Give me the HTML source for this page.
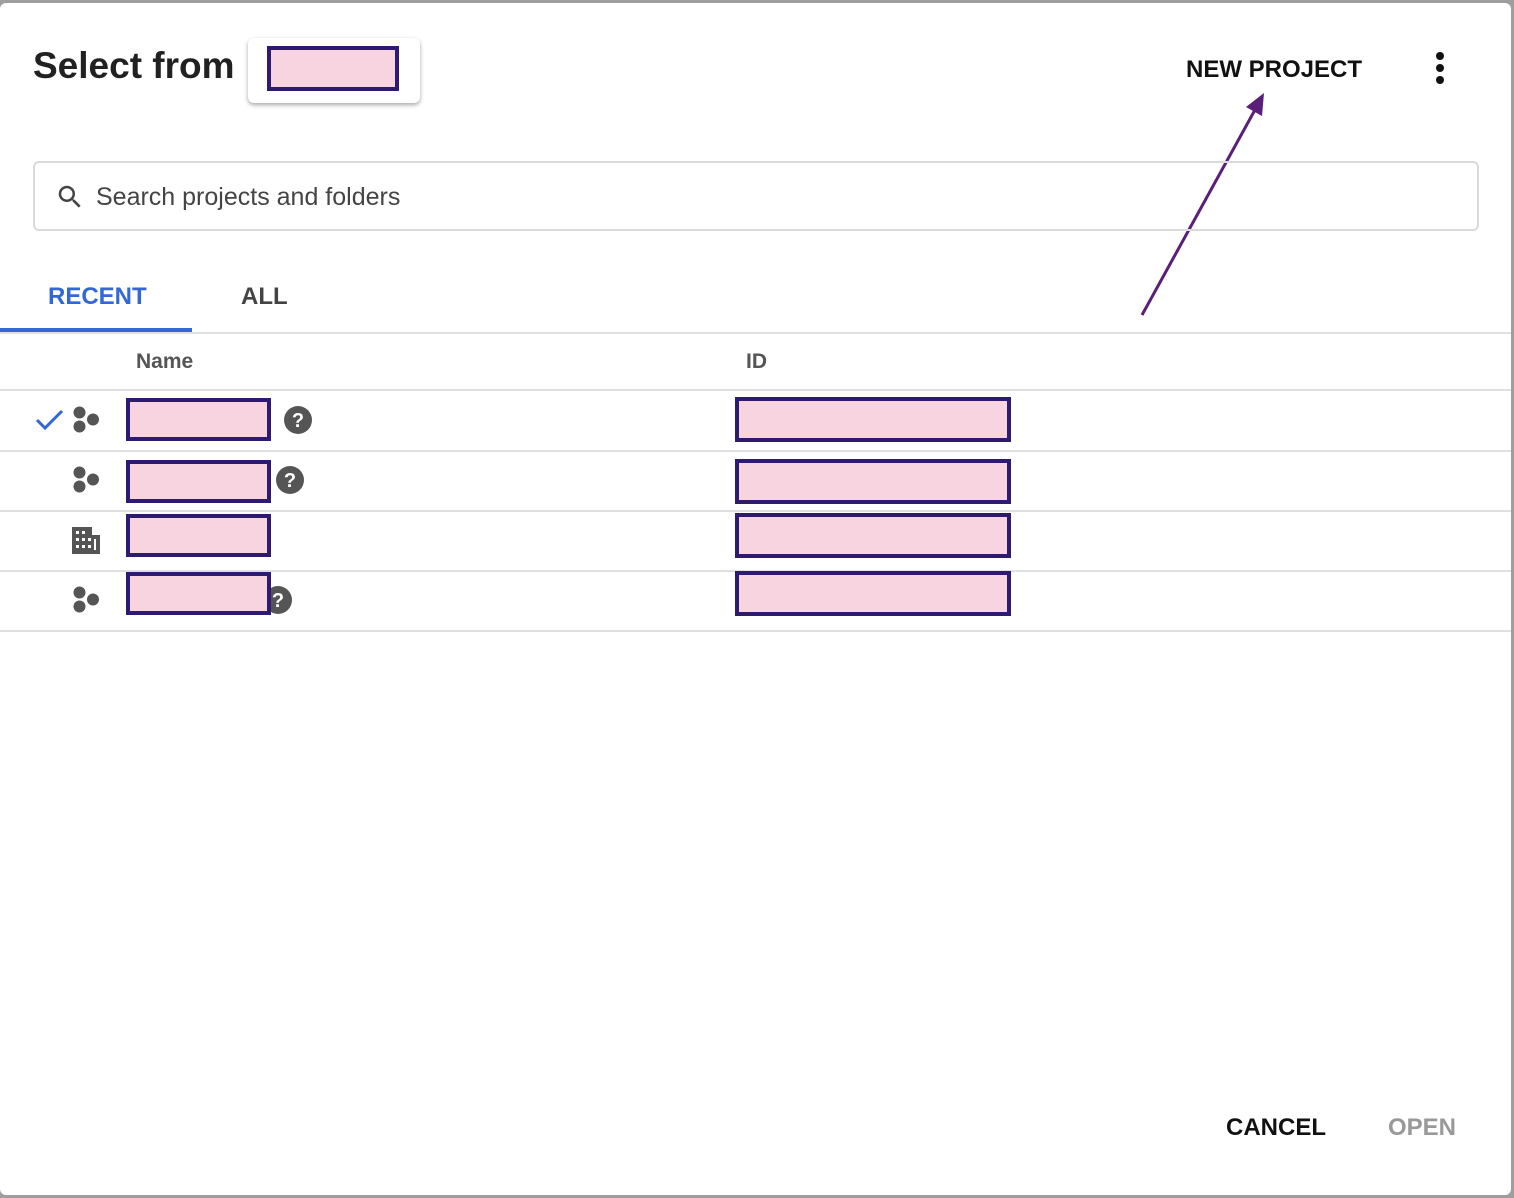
<!DOCTYPE html>
<html><head><style>
body{margin:0;width:1514px;height:1198px;background:#9e9e9e;font-family:"Liberation Sans",sans-serif;position:relative;overflow:hidden}
#d{position:absolute;left:0;top:3px;width:1511px;height:1192px;background:#fff;border-radius:6px}
.a{position:absolute}
.pk{position:absolute;background:#f7d4e0;border:4px solid #2e1a6e;box-sizing:border-box}
.ln{position:absolute;left:0;width:1511px;height:2px;background:#e0e0e0}
.t{position:absolute;white-space:nowrap}
.b{font-weight:bold}
</style></head><body>
<div id="d"></div>
<div class="t b" style="left:33px;top:45px;font-size:37px;color:#212121">Select from</div>
<div class="a" style="left:248px;top:38px;width:172px;height:65px;background:#fff;border-radius:6px;box-shadow:0 2px 4px rgba(0,0,0,.35)"></div>
<div class="pk" style="left:267px;top:46px;width:132px;height:45px"></div>
<div class="t b" style="left:1186px;top:56px;font-size:24px;color:#111">NEW PROJECT</div>
<div class="a" style="left:1436px;top:52px;width:8px;height:8px;border-radius:50%;background:#111"></div>
<div class="a" style="left:1436px;top:64px;width:8px;height:8px;border-radius:50%;background:#111"></div>
<div class="a" style="left:1436px;top:76px;width:8px;height:8px;border-radius:50%;background:#111"></div>
<svg class="a" style="left:0;top:0" width="1514" height="400"><line x1="1142" y1="315" x2="1256" y2="108" stroke="#5b1e78" stroke-width="3"/><polygon points="1264,93 1262,116 1246,107" fill="#5b1e78"/></svg>
<div class="a" style="left:33px;top:161px;width:1446px;height:70px;border:2px solid #dadada;border-radius:6px;box-sizing:border-box"></div>
<svg class="a" style="left:55px;top:182px" width="30" height="30" viewBox="0 0 24 24"><path fill="#444" d="M15.5 14h-.79l-.28-.27A6.470 6.470 0 0 0 16 9.5 6.5 6.5 0 1 0 9.5 16c1.61 0 3.090-.59 4.230-1.570l.27.28v.79l5 4.990L20.490 19l-4.990-5zm-6 0C7.010 14 5 11.990 5 9.5S7.010 5 9.5 5 14 7.010 14 9.5 11.990 14 9.5 14z"/></svg>
<div class="t" style="left:96px;top:183px;font-size:25px;color:#444">Search projects and folders</div>
<div class="t b" style="left:48px;top:283px;font-size:24px;color:#3367d6">RECENT</div>
<div class="t b" style="left:241px;top:283px;font-size:24px;color:#444">ALL</div>
<div class="a" style="left:0;top:328px;width:192px;height:4px;background:#3367d6"></div>
<div class="ln" style="top:332px"></div>
<div class="t b" style="left:136px;top:350px;font-size:21px;color:#555">Name</div>
<div class="t b" style="left:746px;top:350px;font-size:21px;color:#555">ID</div>
<div class="ln" style="top:389px"></div>
<div class="ln" style="top:450px"></div>
<div class="ln" style="top:510px"></div>
<div class="ln" style="top:570px"></div>
<div class="ln" style="top:630px"></div>
<svg class="a" style="left:35px;top:408px" width="30" height="24"><path d="M2 12l8 8L27 3" stroke="#3367d6" stroke-width="3" fill="none"/></svg>
<svg width="0" height="0"><defs><g id="hx" fill="#555"><circle cx="6.5" cy="6.5" r="6"/><circle cx="6.5" cy="20.5" r="6"/><circle cx="20" cy="13.5" r="6"/></g><g id="q"><circle cx="14" cy="14" r="14" fill="#555"/><text x="14" y="21" font-size="20" font-weight="bold" text-anchor="middle" fill="#fff" font-family="Liberation Sans">?</text></g></defs></svg>
<svg class="a" style="left:73px;top:406px" width="28" height="28"><use href="#hx"/></svg>
<svg class="a" style="left:73px;top:466px" width="28" height="28"><use href="#hx"/></svg>
<svg class="a" style="left:73px;top:586px" width="28" height="28"><use href="#hx"/></svg>
<svg class="a" style="left:72px;top:527px" width="28" height="28" viewBox="0 0 28 28"><rect x="0" y="0" width="20" height="27" fill="#555"/><rect x="20" y="8" width="8" height="19" fill="#555"/><g fill="#fff"><rect x="4" y="4" width="3" height="3"/><rect x="10" y="4" width="3" height="3"/><rect x="4" y="11" width="3" height="3"/><rect x="10" y="11" width="3" height="3"/><rect x="16" y="11" width="3" height="3"/><rect x="4" y="18" width="3" height="3"/><rect x="10" y="18" width="3" height="3"/><rect x="16" y="18" width="3" height="3"/><rect x="22" y="12" width="2" height="11"/></g></svg>
<svg class="a" style="left:284px;top:406px" width="28" height="28"><use href="#q"/></svg>
<svg class="a" style="left:276px;top:466px" width="28" height="28"><use href="#q"/></svg>
<svg class="a" style="left:264px;top:586px" width="28" height="28"><use href="#q"/></svg>
<div class="pk" style="left:126px;top:398px;width:145px;height:43px"></div>
<div class="pk" style="left:126px;top:460px;width:145px;height:43px"></div>
<div class="pk" style="left:126px;top:514px;width:145px;height:43px"></div>
<div class="pk" style="left:126px;top:572px;width:145px;height:43px"></div>
<div class="pk" style="left:735px;top:397px;width:276px;height:45px"></div>
<div class="pk" style="left:735px;top:459px;width:276px;height:45px"></div>
<div class="pk" style="left:735px;top:513px;width:276px;height:45px"></div>
<div class="pk" style="left:735px;top:571px;width:276px;height:45px"></div>
<div class="t b" style="left:1226px;top:1114px;font-size:24px;color:#111">CANCEL</div>
<div class="t b" style="left:1388px;top:1114px;font-size:24px;color:#999">OPEN</div>
</body></html>
